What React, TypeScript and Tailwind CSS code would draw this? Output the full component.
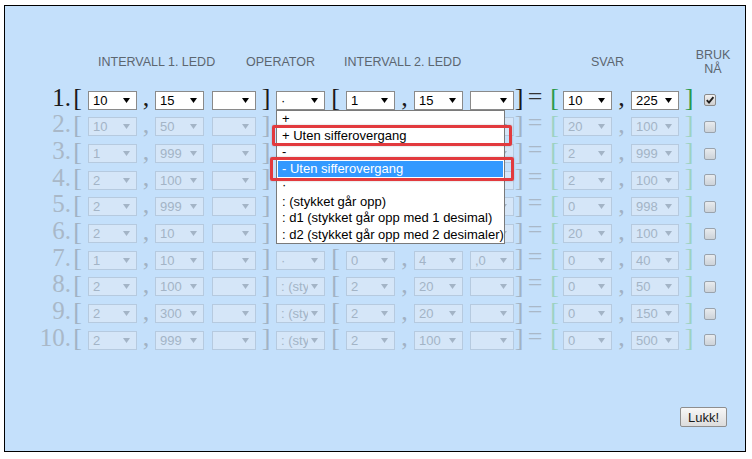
import React from 'react';

type RowData = {
  n: number;
  a: [string, string, string];
  op: string;
  b: [string, string, string];
  s: [string, string];
  checked?: boolean;
  on?: boolean;
};

const rows: RowData[] = [
  { n: 1, a: ['10', '15', ''], op: '·', b: ['1', '15', ''], s: ['10', '225'], checked: true, on: true },
  { n: 2, a: ['10', '50', ''], op: '+', b: ['1', '10', ''], s: ['20', '100'] },
  { n: 3, a: ['1', '999', ''], op: '+', b: ['1', '999', ''], s: ['2', '999'] },
  { n: 4, a: ['2', '100', ''], op: '-', b: ['1', '100', ''], s: ['2', '100'] },
  { n: 5, a: ['2', '999', ''], op: '-', b: ['1', '999', ''], s: ['0', '998'] },
  { n: 6, a: ['2', '10', ''], op: '·', b: ['1', '10', ''], s: ['20', '100'] },
  { n: 7, a: ['1', '10', ''], op: '·', b: ['0', '4', ',0'], s: ['0', '40'] },
  { n: 8, a: ['2', '100', ''], op: ': (stykket går opp)', b: ['2', '20', ''], s: ['0', '50'] },
  { n: 9, a: ['2', '300', ''], op: ': (stykket går opp)', b: ['2', '20', ''], s: ['0', '150'] },
  { n: 10, a: ['2', '999', ''], op: ': (stykket går opp)', b: ['2', '100', ''], s: ['0', '500'] },
];

const options = [
  '+',
  '+ Uten sifferovergang',
  '-',
  '- Uten sifferovergang',
  '·',
  ': (stykket går opp)',
  ': d1 (stykket går opp med 1 desimal)',
  ': d2 (stykket går opp med 2 desimaler)',
];

function Sel({ v, w, on }: { v: string; w: string; on: boolean }) {
  return (
    <div
      className={`flex h-[19px] shrink-0 items-center overflow-hidden border ${
        on ? 'border-[#8a8a8a] bg-white text-black' : 'border-[#b6cadf] bg-[#d5e6f8] text-[#a3b4c6]'
      } ${w}`}
    >
      <span className="min-w-0 flex-1 overflow-hidden whitespace-nowrap pl-[4px] text-[13px] leading-[17px]">{v}</span>
      <svg width="7" height="5" viewBox="0 0 7 5" className="ml-[3px] mr-[6px] shrink-0">
        <path d="M0 0h7L3.5 5z" fill="currentColor" />
      </svg>
    </div>
  );
}

function Glyph({ ch, w, color, pb }: { ch: string; w: string; color: string; pb: string }) {
  return (
    <div
      className={`flex shrink-0 justify-center font-['Liberation_Serif','Times_New_Roman',serif] text-[26px] leading-none ${w} ${color} ${pb}`}
    >
      {ch}
    </div>
  );
}

function Check({ checked }: { checked?: boolean }) {
  return (
    <div
      className={`flex h-[12px] w-[12px] items-center justify-center rounded-[2px] border bg-linear-to-b ${
        checked ? 'border-[#8a8a8a] from-[#f2f2f2] to-[#cfcfcf]' : 'border-[#9aa3ad] from-[#e8ebee] to-[#cdd3d9]'
      }`}
    >
      {checked && (
        <svg width="10" height="10" viewBox="0 0 10 10">
          <path d="M1.8 5.2 L4 7.6 L8.4 2.2" fill="none" stroke="#1f1f1f" strokeWidth="1.9" />
        </svg>
      )}
    </div>
  );
}

function Row({ r }: { r: RowData }) {
  const on = !!r.on;
  const numC = on ? 'text-[#1a1a1a]' : 'text-[#a9b8c8]';
  const brC = on ? 'text-[#1a1a1a]' : 'text-[#a1b2c4]';
  const grC = on ? 'text-[#2b9a4b]' : 'text-[#9dd2c2]';
  const eqC = on ? 'text-[#333333]' : 'text-[#a9b8c8]';
  return (
    <div className="flex h-[26.67px] items-center">
      <div
        className={`w-[66px] shrink-0 pb-[6px] text-right font-['Liberation_Serif','Times_New_Roman',serif] text-[25px] leading-none ${numC}`}
      >
        {r.n}.
      </div>
      <Glyph ch="[" w="w-[13px]" color={brC} pb="pb-[4px]" />
      <Sel v={r.a[0]} w="ml-[4px] w-[49px]" on={on} />
      <Glyph ch="," w="w-[18px]" color={brC} pb="pb-[4px]" />
      <Sel v={r.a[1]} w="w-[49px]" on={on} />
      <Sel v={r.a[2]} w="ml-[8px] w-[44px]" on={on} />
      <Glyph ch="]" w="w-[20px]" color={brC} pb="pb-[4px]" />
      <Sel v={r.op} w="w-[49px]" on={on} />
      <Glyph ch="[" w="w-[21px]" color={brC} pb="pb-[4px]" />
      <Sel v={r.b[0]} w="w-[49px]" on={on} />
      <Glyph ch="," w="w-[19px]" color={brC} pb="pb-[4px]" />
      <Sel v={r.b[1]} w="w-[49px]" on={on} />
      <Sel v={r.b[2]} w="ml-[7px] w-[44px]" on={on} />
      <Glyph ch="]" w="w-[10px]" color={brC} pb="pb-[4px]" />
      <Glyph ch="=" w="w-[22px]" color={eqC} pb="pb-[7px]" />
      <Glyph ch="[" w="w-[17px]" color={grC} pb="pb-[4px]" />
      <Sel v={r.s[0]} w="w-[49px]" on={on} />
      <Glyph ch="," w="w-[19px]" color={brC} pb="pb-[4px]" />
      <Sel v={r.s[1]} w="w-[48px]" on={on} />
      <Glyph ch="]" w="w-[20px]" color={grC} pb="pb-[4px]" />
      <div className="flex w-[22px] shrink-0 justify-center">
        <Check checked={r.checked} />
      </div>
    </div>
  );
}

export default function App() {
  return (
    <div className="h-[459px] w-[752px] overflow-hidden bg-white pl-[4px] pt-[5px] font-['Liberation_Sans',Arial,sans-serif]">
      <div className="relative flex h-[447px] w-[742px] flex-col border border-black bg-[#c4e0fb]">
        <div className="mt-[42px] flex h-[28px] items-center text-[12.5px] text-[#5c6670]">
          <div className="ml-[93px] w-[148px] shrink-0">INTERVALL 1. LEDD</div>
          <div className="w-[98px] shrink-0">OPERATOR</div>
          <div className="w-[247px] shrink-0">INTERVALL 2. LEDD</div>
          <div className="w-[100px] shrink-0">SVAR</div>
          <div className="w-[44px] shrink-0 text-center leading-[14px]">
            BRUK
            <br />
            NÅ
          </div>
        </div>
        <div className="mt-[11px] flex flex-col">
          {rows.map((r) => (
            <Row key={r.n} r={r} />
          ))}
        </div>
        <div className="flex-1" />
        <div className="flex justify-end pb-[24px] pr-[18px]">
          <button className="h-[20px] w-[47px] rounded-[2px] border border-[#8e8e8e] bg-linear-to-b from-[#f7f7f7] to-[#dcdcdc] text-[13px] leading-none text-[#1a1a1a]">
            Lukk!
          </button>
        </div>

        <div className="absolute left-[271px] top-[104px] flex h-[134px] w-[229px] flex-col border border-[#7a7a7a] bg-white px-[1px]">
          {options.map((o, i) => (
            <div
              key={i}
              className={`h-[16.5px] whitespace-nowrap pl-[4px] text-[13px] leading-[16.5px] ${
                i === 3 ? 'bg-[#3399ff] text-white' : 'text-black'
              }`}
            >
              {o}
            </div>
          ))}
        </div>
        <div className="absolute left-[267px] top-[119px] h-[21px] w-[240px] rounded-[2px] border-[3px] border-[#e23a3e] shadow-[0_0_2px_rgba(0,0,0,0.25)]" />
        <div className="absolute left-[265px] top-[151px] h-[24px] w-[244px] rounded-[2px] border-[3px] border-[#e23a3e] shadow-[0_0_2px_rgba(0,0,0,0.25)]" />
      </div>
    </div>
  );
}
